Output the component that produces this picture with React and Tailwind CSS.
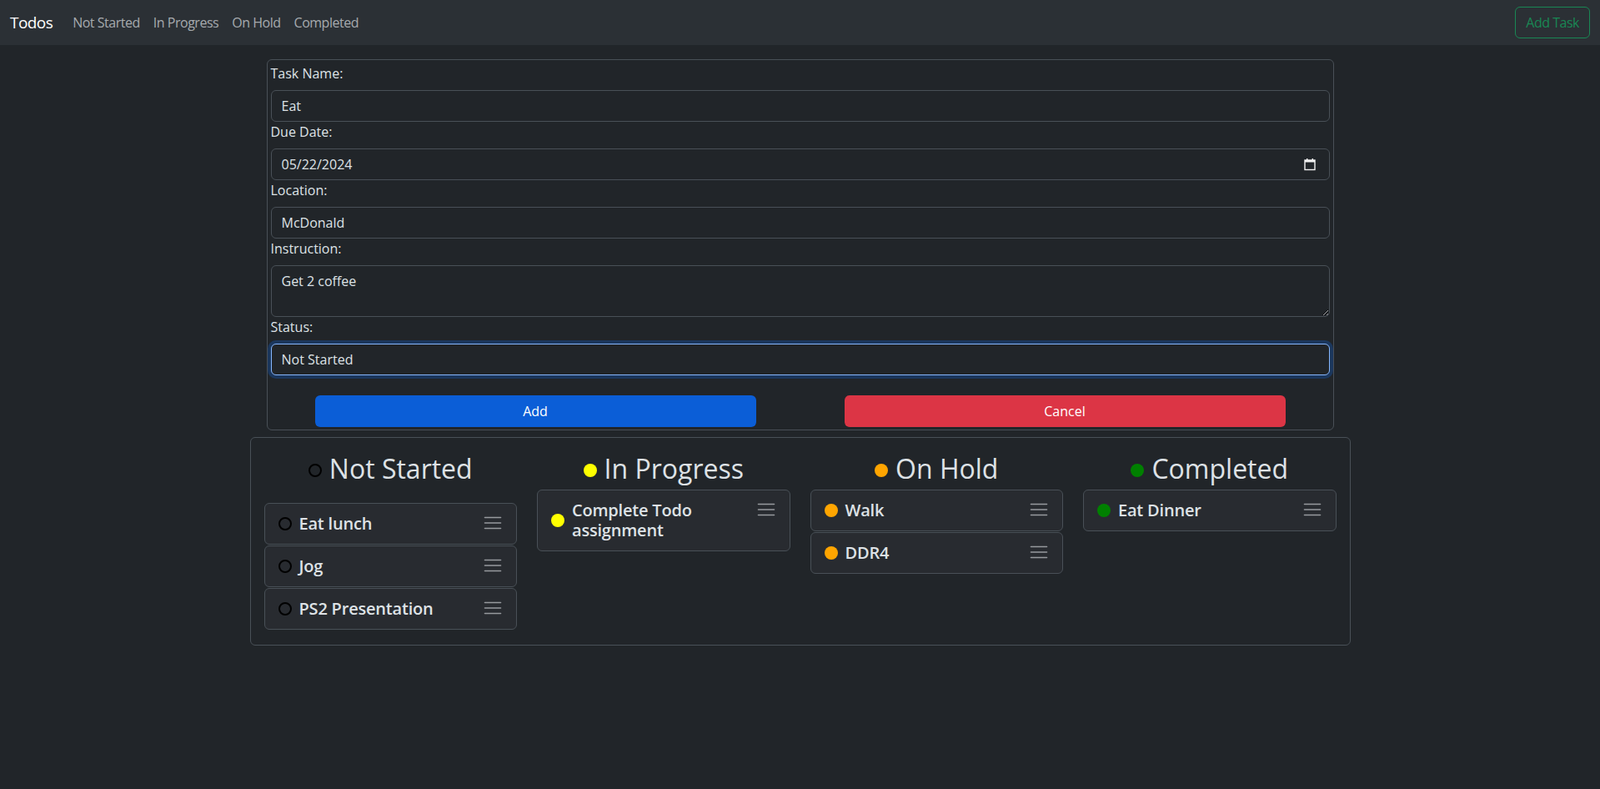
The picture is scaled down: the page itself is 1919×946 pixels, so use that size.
import { useState } from "react";

const columns = [
  {
    name: "Not Started",
    dot: "border-2 border-black bg-transparent",
    cardGap: "mt-[22px]",
    tasks: ["Eat lunch", "Jog", "PS2 Presentation"],
  },
  {
    name: "In Progress",
    dot: "bg-[#ffff00]",
    cardGap: "mt-[6px]",
    tasks: ["Complete Todo assignment"],
  },
  {
    name: "On Hold",
    dot: "bg-[#ffa500]",
    cardGap: "mt-[6px]",
    tasks: ["Walk", "DDR4"],
  },
  {
    name: "Completed",
    dot: "bg-[#008000]",
    cardGap: "mt-[6px]",
    tasks: ["Eat Dinner"],
  },
];

function MenuIcon() {
  return (
    <svg width="24" height="24" viewBox="0 0 24 24" className="shrink-0">
      <g stroke="#979a9e" strokeWidth="1.6" strokeLinecap="round">
        <line x1="2.5" y1="4.5" x2="21.5" y2="4.5" />
        <line x1="2.5" y1="11" x2="21.5" y2="11" />
        <line x1="2.5" y1="17.5" x2="21.5" y2="17.5" />
      </g>
    </svg>
  );
}

function CalendarIcon() {
  return (
    <svg width="14" height="16" viewBox="0 0 14 16">
      <rect x="1" y="3" width="12" height="11.5" fill="none" stroke="#f2f2f2" strokeWidth="1.4" />
      <rect x="1" y="3" width="12" height="2.5" fill="#f2f2f2" />
      <rect x="3" y="1" width="1.4" height="3" fill="#f2f2f2" />
      <rect x="9.6" y="1" width="1.4" height="3" fill="#f2f2f2" />
    </svg>
  );
}

function Field({ label, children }) {
  return (
    <div>
      <label className="block text-[16px] leading-6 mb-2">{label}</label>
      {children}
    </div>
  );
}

export default function App() {
  const [name, setName] = useState("Eat");
  const [location, setLocation] = useState("McDonald");
  const [instruction, setInstruction] = useState("Get 2 coffee");
  const [status, setStatus] = useState("Not Started");

  const inputCls =
    "block w-full h-[38px] rounded-md border border-[#495057] bg-[#212529] px-3 text-[16px] text-[#dee2e6] outline-none";

  return (
    <div className="min-h-screen bg-[#212529] text-[#dee2e6] font-['Segoe_UI','Open_Sans',sans-serif]">
      {/* NAVBAR */}
      <nav className="h-[54px] bg-[#2b3035] flex items-center px-3">
        <span className="text-[19px] leading-[30px] tracking-[-0.03em] text-white mr-4">Todos</span>
        {["Not Started", "In Progress", "On Hold", "Completed"].map((l) => (
          <a key={l} className="px-2 text-[16px] leading-6 tracking-[-0.03em] text-[#a6aaae] cursor-pointer">
            {l}
          </a>
        ))}
        <button className="ml-auto h-[38px] px-3 rounded-md border border-[#198754] text-[#198754] text-[16px] tracking-[-0.03em]">
          Add Task
        </button>
      </nav>

      {/* FORM */}
      <form className="mx-auto mt-[17px] w-[1280px] border border-[#495057] rounded-md px-[4px] pt-[4px] pb-[3px]">
        <Field label="Task Name:">
          <input className={inputCls} value={name} onChange={(e) => setName(e.target.value)} />
        </Field>
        <Field label="Due Date:">
          <div className="flex items-center justify-between h-[38px] rounded-md border border-[#495057] bg-[#212529] pl-3 pr-[16px] text-[16px]">
            <span>05/22/2024</span>
            <CalendarIcon />
          </div>
        </Field>
        <Field label="Location:">
          <input className={inputCls} value={location} onChange={(e) => setLocation(e.target.value)} />
        </Field>
        <Field label="Instruction:">
          <textarea
            rows={2}
            value={instruction}
            onChange={(e) => setInstruction(e.target.value)}
            className="block w-full h-[62px] rounded-md border border-[#495057] bg-[#212529] px-3 py-[6px] text-[16px] leading-6 text-[#dee2e6] outline-none resize-y"
          />
        </Field>
        <Field label="Status:">
          <input
            className="block w-full h-[38px] rounded-md border border-[#86b7fe] bg-[#212529] px-3 text-[16px] text-[#dee2e6] outline-none shadow-[0_0_0_4px_rgba(13,110,253,0.25)]"
            value={status}
            onChange={(e) => setStatus(e.target.value)}
          />
        </Field>
        <div className="grid grid-cols-2 mt-6">
          <button type="button" className="mx-auto w-[529px] h-[38px] rounded-md bg-[#0b5ed7] text-white text-[16px]">
            Add
          </button>
          <button type="button" className="mx-auto w-[529px] h-[38px] rounded-md bg-[#dc3545] text-white text-[16px]">
            Cancel
          </button>
        </div>
      </form>

      {/* BOARD */}
      <div className="mx-auto mt-2 w-[1320px] border border-[#495057] rounded-md px-[4px] pt-[18px] pb-[18px] grid grid-cols-4 items-start">
        {columns.map((col) => (
          <div key={col.name} className="px-3 flex flex-col">
            <h2 className="flex items-center justify-center gap-[9px] text-[32px] leading-[38px] font-medium">
              <span className={`w-4 h-4 mt-1 rounded-full shrink-0 ${col.dot}`} />
              {col.name}
            </h2>
            <div className={`flex flex-col gap-[1px] ${col.cardGap}`}>
              {col.tasks.map((t) => (
                <div
                  key={t}
                  className="flex items-start justify-between gap-2 rounded-md border border-[#495057] bg-[#282b30] px-4 py-3"
                >
                  <div className="flex items-center gap-[9px]">
                    <span className={`w-4 h-4 rounded-full shrink-0 ${col.dot}`} />
                    <span className="text-[20px] leading-6 font-semibold tracking-[-0.01em]">{t}</span>
                  </div>
                  <MenuIcon />
                </div>
              ))}
            </div>
          </div>
        ))}
      </div>
    </div>
  );
}
